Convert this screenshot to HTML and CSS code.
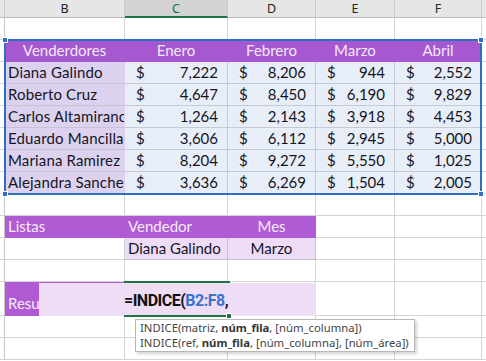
FILE: index.html
```html
<!DOCTYPE html>
<html>
<head>
<meta charset="utf-8">
<link rel="stylesheet" href="styles.css">
</head>
<body>
<div class="sheet">
  <div class="h e"></div><div class="h">B</div><div class="h act">C</div><div class="h">D</div><div class="h">E</div><div class="h">F</div><div class="h g"></div>

  <div class="c e"></div><div class="c"></div><div class="c"></div><div class="c"></div><div class="c"></div><div class="c"></div><div class="c g"></div>

  <div class="c e"></div><div class="c th">Venderdores</div><div class="c th">Enero</div><div class="c th">Febrero</div><div class="c th">Marzo</div><div class="c th">Abril</div><div class="c g"></div>

  <div class="c e"></div><div class="c nm">Diana Galindo</div><div class="c nu"><span>$</span><span>7,222</span></div><div class="c nu"><span>$</span><span>8,206</span></div><div class="c nu"><span>$</span><span>944</span></div><div class="c nu"><span>$</span><span>2,552</span></div><div class="c g"></div>

  <div class="c e"></div><div class="c nm">Roberto Cruz</div><div class="c nu"><span>$</span><span>4,647</span></div><div class="c nu"><span>$</span><span>8,450</span></div><div class="c nu"><span>$</span><span>6,190</span></div><div class="c nu"><span>$</span><span>9,829</span></div><div class="c g"></div>

  <div class="c e"></div><div class="c nm">Carlos Altamirano</div><div class="c nu"><span>$</span><span>1,264</span></div><div class="c nu"><span>$</span><span>2,143</span></div><div class="c nu"><span>$</span><span>3,918</span></div><div class="c nu"><span>$</span><span>4,453</span></div><div class="c g"></div>

  <div class="c e"></div><div class="c nm">Eduardo Mancillas</div><div class="c nu"><span>$</span><span>3,606</span></div><div class="c nu"><span>$</span><span>6,112</span></div><div class="c nu"><span>$</span><span>2,945</span></div><div class="c nu"><span>$</span><span>5,000</span></div><div class="c g"></div>

  <div class="c e"></div><div class="c nm">Mariana Ramirez</div><div class="c nu"><span>$</span><span>8,204</span></div><div class="c nu"><span>$</span><span>9,272</span></div><div class="c nu"><span>$</span><span>5,550</span></div><div class="c nu"><span>$</span><span>1,025</span></div><div class="c g"></div>

  <div class="c e"></div><div class="c nm">Alejandra Sanchez</div><div class="c nu"><span>$</span><span>3,636</span></div><div class="c nu"><span>$</span><span>6,269</span></div><div class="c nu"><span>$</span><span>1,504</span></div><div class="c nu"><span>$</span><span>2,005</span></div><div class="c g"></div>

  <div class="c e"></div><div class="c"></div><div class="c"></div><div class="c"></div><div class="c"></div><div class="c"></div><div class="c g"></div>

  <div class="c e"></div><div class="c pu">Listas</div><div class="c pu">Vendedor</div><div class="c pu ctr">Mes</div><div class="c"></div><div class="c"></div><div class="c g"></div>

  <div class="c e"></div><div class="c"></div><div class="c lv">Diana Galindo</div><div class="c lv ctr">Marzo</div><div class="c"></div><div class="c"></div><div class="c g"></div>

  <div class="c e"></div><div class="c"></div><div class="c"></div><div class="c"></div><div class="c"></div><div class="c"></div><div class="c g"></div>

  <div class="c e"></div><div class="c pu res">Resultado</div><div class="c"></div><div class="c"></div><div class="c"></div><div class="c"></div><div class="c g"></div>

  <div class="c e"></div><div class="c"></div><div class="c"></div><div class="c"></div><div class="c"></div><div class="c"></div><div class="c g"></div>

  <div class="c e"></div><div class="c"></div><div class="c"></div><div class="c"></div><div class="c"></div><div class="c"></div><div class="c g"></div>
</div>

<div class="selection"></div>
<div class="handle h-tl"></div>
<div class="handle h-tr"></div>
<div class="handle h-bl"></div>
<div class="handle h-br"></div>

<div class="editor"><span class="ftext">=INDICE(<span class="ref">B2:F8</span>,</span></div>
<div class="active"></div>
<div class="ahandle"></div>

<div class="tooltip">
  <div class="tline">INDICE(matriz, <b>núm_fila</b>, [núm_columna])</div>
  <div class="tline">INDICE(ref, <b>núm_fila</b>, [núm_columna], [núm_área])</div>
</div>
</body>
</html>
```

FILE: styles.css
```css
html, body {
  margin: 0;
  padding: 0;
}
body {
  width: 486px;
  height: 361px;
  overflow: hidden;
  background: #ffffff;
  position: relative;
  font-family: Lato, "Noto Sans", sans-serif;
}
.sheet {
  display: grid;
  grid-template-columns: 5px 120px 103px 88px 79px 87px 4px;
  grid-template-rows: 18px repeat(12, 22px) 34px 22px 22px;
}
.c {
  box-sizing: border-box;
  border-right: 1px solid #d4d4d4;
  border-bottom: 1px solid #d4d4d4;
  overflow: hidden;
  white-space: nowrap;
  font-size: 15px;
  line-height: 18px;
  display: flex;
  align-items: flex-end;
  padding: 0 3px 2px 3px;
  color: #15151f;
}
.e { padding: 0; border-right-color: #c8c8c8; }
.g { border-right: none; padding: 0; }

.h {
  box-sizing: border-box;
  background: #e6e6e6;
  border-right: 1px solid #c9c9c9;
  border-bottom: 1px solid #bdbdbd;
  display: flex;
  align-items: center;
  justify-content: center;
  font-family: "Noto Sans", sans-serif;
  font-size: 12.5px;
  color: #262626;
}
.h.act {
  background: #d3d3d3;
  border-bottom: 2px solid #217346;
  color: #1d6b4a;
}
.h.g { border-right: none; }

.th {
  background: #a558d0;
  border-color: #a558d0;
  color: #f4e8fb;
  justify-content: center;
}
.nm {
  background: #dcd2f0;
  border-right-color: #dcd2f0;
  border-bottom-color: #c6c4d2;
  letter-spacing: 0.15px;
}
.nu {
  background: #e8eef8;
  border-color: #c6cad4;
  justify-content: space-between;
  padding: 0 9px 2px 11px;
}
.pu {
  background: #b05ad3;
  border-color: #b05ad3;
  color: #f6ecfb;
}
.ctr { justify-content: center; }
.lv {
  background: #eedcf6;
  border-color: #c4c0c8;
}
.res { padding-bottom: 3px; }

.selection {
  position: absolute;
  left: 4px;
  top: 39px;
  width: 478px;
  height: 156px;
  box-sizing: border-box;
  border: 2px solid #2f6dc6;
}
.handle {
  position: absolute;
  width: 6px;
  height: 6px;
  box-sizing: border-box;
  background: #2f6dc6;
  border: 1px solid #ffffff;
}
.h-tl { left: 2px; top: 37px; }
.h-tr { left: 478px; top: 37px; }
.h-bl { left: 2px; top: 191px; }
.h-br { left: 478px; top: 191px; }

.editor {
  position: absolute;
  left: 39px;
  top: 283px;
  width: 277px;
  height: 33px;
  background: #efdcf5;
  box-sizing: border-box;
  display: flex;
  align-items: flex-end;
  padding: 0 0 6px 85px;
}
.ftext {
  font-family: Roboto, "Liberation Sans", Arial, sans-serif;
  font-weight: bold;
  font-size: 16px;
  letter-spacing: -0.5px;
  line-height: 18px;
  color: #111111;
}
.ref { color: #3a74cc; }
.active {
  position: absolute;
  left: 124px;
  top: 281px;
  width: 106px;
  height: 36px;
  box-sizing: border-box;
  border-top: 2px solid #217346;
  border-bottom: 2px solid #217346;
}
.ahandle {
  position: absolute;
  left: 226px;
  top: 313px;
  width: 6px;
  height: 6px;
  box-sizing: border-box;
  background: #217346;
  border: 1px solid #ffffff;
}

.tooltip {
  position: absolute;
  left: 135px;
  top: 319px;
  width: 280px;
  height: 33px;
  box-sizing: border-box;
  background: #ffffff;
  border: 1px solid #b8b8b8;
  box-shadow: 2px 2px 3px rgba(0, 0, 0, 0.18);
  padding: 0 0 0 4px;
  font-family: "Noto Sans", sans-serif;
  font-size: 11.3px;
  line-height: 15px;
  color: #444444;
}
.tline { white-space: nowrap; }
.tooltip b { color: #333333; font-weight: bold; }
```
